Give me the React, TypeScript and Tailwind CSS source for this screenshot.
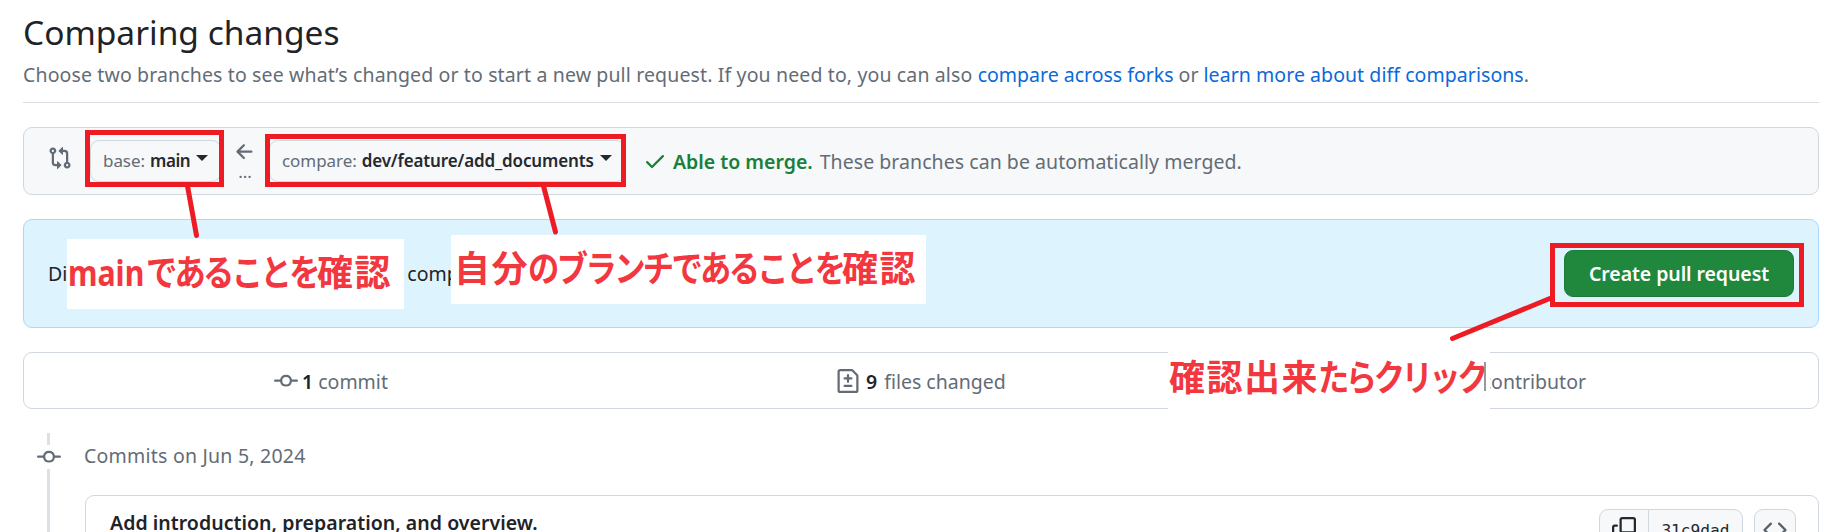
import type { ReactNode } from "react";

type IconProps = { className?: string; children: ReactNode };

function Octicon({ className, children }: IconProps) {
  return (
    <svg viewBox="0 0 16 16" width="24" height="24" fill="currentColor" fillRule="evenodd" className={className}>
      {children}
    </svg>
  );
}

const CommitPath = () => (
  <path d="M11.93 8.5a4.002 4.002 0 0 1-7.86 0H.75a.75.75 0 0 1 0-1.5h3.32a4.002 4.002 0 0 1 7.86 0h3.32a.75.75 0 0 1 0 1.5Zm-1.43-.75a2.5 2.5 0 1 0-5 0 2.5 2.5 0 0 0 5 0Z" />
);

function Header() {
  return (
    <header className="h-[103px] border-b border-[#d8dee4] pt-[10px]">
      <h1 className="text-[33.5px] leading-[45px] font-normal text-[#1f2328]">Comparing changes</h1>
      <p className="mt-[5px] leading-[30px] text-[#636c76]">
        <span className="tracking-[0.135px]">
          Choose two branches to see what’s changed or to start a new pull request. If you need to, you can also{" "}
        </span>
        <a className="text-[#0969da]">compare across forks</a> or{" "}
        <a className="text-[#0969da] tracking-[0.06px]">learn more about diff comparisons</a>.
      </p>
    </header>
  );
}

function BranchButton({ label, name, className }: { label: string; name: ReactNode; className: string }) {
  return (
    <div className={`flex h-[42px] items-center rounded-[9px] border border-[#d0d7de] bg-[#f6f8fa] pl-[12px] text-[17px] ${className}`}>
      <span className="tracking-[-0.06px] text-[#636c76]">{label}</span>
      <span className="ml-[5px] font-semibold text-[#24292f]">{name}</span>
      <span className="mb-[7px] ml-[6px] h-0 w-0 border-x-6 border-t-6 border-x-transparent border-t-[#24292f]" />
    </div>
  );
}

function RangeEditor() {
  return (
    <section className="mt-6 flex h-[68px] items-center rounded-[9px] border border-[#d0d7de] bg-[#f6f8fa] pl-6">
      <Octicon className="-mt-[6px] text-[#636c76]">
        <path d="M9.573.677A.25.25 0 0 1 10 .854V2.5h1A2.5 2.5 0 0 1 13.5 5v5.628a2.251 2.251 0 1 1-1.5 0V5a1 1 0 0 0-1-1h-1v1.646a.25.25 0 0 1-.427.177L7.177 3.427a.25.25 0 0 1 0-.354ZM6 12v-1.646a.25.25 0 0 1 .427-.177l2.396 2.396a.25.25 0 0 1 0 .354l-2.396 2.396A.25.25 0 0 1 6 15.146V13.5H5A2.5 2.5 0 0 1 2.5 11V5.372a2.25 2.25 0 1 1 1.5 0V11a1 1 0 0 0 1 1ZM3.25 2.5a.75.75 0 1 0 0 1.5.75.75 0 0 0 0-1.5ZM12.75 12a.75.75 0 1 0 0 1.5.75.75 0 0 0 0-1.5Z" />
      </Octicon>
      <BranchButton label="base:" name={<span className="tracking-[-0.4px]">main</span>} className="ml-[18px] w-[131px]" />
      <div className="ml-3 flex w-6 flex-col items-center text-[#636c76]">
        <Octicon className="-mt-[3px]">
          <path d="M7.78 12.53a.75.75 0 0 1-1.06 0L2.47 8.28a.75.75 0 0 1 0-1.06l4.25-4.25a.751.751 0 0 1 1.042.018.751.751 0 0 1 .018 1.042L4.81 7h7.44a.75.75 0 0 1 0 1.5H4.81l2.97 2.97a.75.75 0 0 1 0 1.06Z" />
        </Octicon>
        <span className="-mt-px h-[17px] text-[17px] leading-[17px]">...</span>
      </div>
      <BranchButton
        label="compare:"
        name={<span className="tracking-[-0.13px]">dev/feature/add_documents</span>}
        className="ml-[12px] w-[356px]"
      />
      <div className="ml-[18px] flex items-center">
        <Octicon className="text-[#1a7f37]">
          <path d="M13.78 4.22a.75.75 0 0 1 0 1.06l-7.25 7.25a.75.75 0 0 1-1.06 0L2.22 9.28a.751.751 0 0 1 .018-1.042.751.751 0 0 1 1.042-.018L6 10.94l6.72-6.72a.75.75 0 0 1 1.06 0Z" />
        </Octicon>
        <span className="ml-[6px] pt-px font-semibold text-[#1a7f37]">Able to merge.</span>
        <span className="ml-[7px] pt-px tracking-[0.05px] text-[#636c76]">These branches can be automatically merged.</span>
      </div>
    </section>
  );
}

function PullRequestPrompt() {
  return (
    <section className="mt-6 flex h-[109px] items-center justify-between rounded-[9px] border border-[#a8d8ff] bg-[#ddf4ff] pr-6 pl-6">
      <p className="tracking-[0.09px] text-[#1f2328]">
        Discuss and review the changes in this comparison with others.
      </p>
      <button className="h-[47px] w-[230px] rounded-[9px] border border-[#1c7b37] bg-[#1f883d] pt-px font-semibold tracking-[-0.08px] text-white">
        Create pull request
      </button>
    </section>
  );
}

function Stats() {
  return (
    <section className="mt-6 grid h-[57px] grid-cols-3 items-center rounded-[9px] border border-[#d0d7de] text-[#636c76]">
      <div className="flex items-center pl-[250px]">
        <Octicon>
          <CommitPath />
        </Octicon>
        <span className="ml-[4px] pt-[2px]">
          <span className="font-semibold text-[#1f2328]">1</span> commit
        </span>
      </div>
      <div className="flex items-center pl-[214px]">
        <Octicon>
          <path d="M1 1.75C1 .784 1.784 0 2.75 0h7.586c.464 0 .909.184 1.237.513l2.914 2.914c.329.328.513.773.513 1.237v9.586A1.75 1.75 0 0 1 13.25 16H2.75A1.75 1.75 0 0 1 1 14.25Zm1.75-.25a.25.25 0 0 0-.25.25v12.5c0 .138.112.25.25.25h10.5a.25.25 0 0 0 .25-.25V4.664a.25.25 0 0 0-.073-.177l-2.914-2.914a.25.25 0 0 0-.177-.073ZM8 3.25a.75.75 0 0 1 .75.75v1.5h1.5a.75.75 0 0 1 0 1.5h-1.5v1.5a.75.75 0 0 1-1.5 0V7h-1.5a.75.75 0 0 1 0-1.5h1.5V4A.75.75 0 0 1 8 3.25Zm-3 8a.75.75 0 0 1 .75-.75h4.5a.75.75 0 0 1 0 1.5h-4.5a.75.75 0 0 1-.75-.75Z" />
        </Octicon>
        <span className="ml-[6px] pt-[2px]">
          <span className="font-semibold text-[#1f2328]">9</span>
          <span className="ml-[7px]">files changed</span>
        </span>
      </div>
      <div className="pt-[2px] pr-[232px] text-right">
        <span className="font-semibold text-[#1f2328]">1</span> contributor
      </div>
    </section>
  );
}

function Timeline() {
  return (
    <section className="mt-6 flex h-[99px] overflow-hidden">
      <div className="flex w-[62px] flex-col items-start">
        <div className="ml-6 h-3 w-[3px] bg-[#dce1e6]" />
        <Octicon className="ml-[14px] text-[#636c76]">
          <CommitPath />
        </Octicon>
        <div className="ml-6 w-[3px] flex-1 bg-[#dce1e6]" />
      </div>
      <div className="flex-1">
        <h2 className="mt-[8px] -ml-px leading-[30px] font-normal tracking-[0.23px] text-[#636c76]">Commits on Jun 5, 2024</h2>
        <div className="mt-[24px] flex h-[80px] items-start rounded-t-[9px] border border-[#d0d7de] pl-6">
          <p className="mt-[12px] leading-[30px] font-semibold tracking-[0.04px] text-[#1f2328]">
            Add introduction, preparation, and overview.
          </p>
          <div className="mt-[13px] mr-[22px] ml-auto flex gap-[11px]">
            <div className="flex h-[42px] rounded-[9px] border border-[#d0d7de] bg-[#f6f8fa]">
              <div className="flex w-[49px] justify-center border-r border-[#d0d7de] pt-[7px]">
                <Octicon className="text-[#24292f]">
                  <path d="M0 6.75C0 5.784.784 5 1.75 5h1.5a.75.75 0 0 1 0 1.5h-1.5a.25.25 0 0 0-.25.25v7.5c0 .138.112.25.25.25h7.5a.25.25 0 0 0 .25-.25v-1.5a.75.75 0 0 1 1.5 0v1.5A1.75 1.75 0 0 1 9.25 16h-7.5A1.75 1.75 0 0 1 0 14.25Z" />
                  <path d="M5 1.75C5 .784 5.784 0 6.75 0h7.5C15.216 0 16 .784 16 1.75v7.5A1.75 1.75 0 0 1 14.25 11h-7.5A1.75 1.75 0 0 1 5 9.25Zm1.75-.25a.25.25 0 0 0-.25.25v7.5c0 .138.112.25.25.25h7.5a.25.25 0 0 0 .25-.25v-7.5a.25.25 0 0 0-.25-.25Z" />
                </Octicon>
              </div>
              <span className="w-[93px] pt-[8px] text-center font-['DejaVu_Sans_Mono',monospace] text-[16.2px] leading-[26px] text-[#24292f]">
                31c9dad
              </span>
            </div>
            <div className="flex h-[42px] w-[42px] justify-center rounded-[9px] border border-[#d0d7de] bg-[#f6f8fa] pt-[8px]">
              <Octicon className="text-[#57606a]">
                <path d="m11.28 3.22 4.25 4.25a.75.75 0 0 1 0 1.06l-4.25 4.25a.749.749 0 0 1-1.275-.326.749.749 0 0 1 .215-.734L13.94 8l-3.72-3.72a.749.749 0 0 1 .326-1.275.749.749 0 0 1 .734.215Zm-6.56 0a.751.751 0 0 1 1.042.018.751.751 0 0 1 .018 1.042L2.06 8l3.72 3.72a.749.749 0 0 1-.326 1.275.749.749 0 0 1-.734-.215L.47 8.53a.75.75 0 0 1 0-1.06Z" />
              </Octicon>
            </div>
          </div>
        </div>
      </div>
    </section>
  );
}

/* Red callout text: kanji at full width, kana condensed. */
function Kanji({ children }: { children: string }) {
  return <span className="tracking-[1.5px]">{children}</span>;
}

function Kana({ children, className }: { children: string; className: string }) {
  return (
    <span className={className}>
      <span className="-ml-px inline-block origin-left scale-x-[0.87]">{children}</span>
    </span>
  );
}

function Callouts() {
  return (
    <div className="pointer-events-none absolute inset-0 font-['Noto_Sans','Noto_Sans_CJK_JP',sans-serif] text-[36px] leading-[50px] font-bold whitespace-nowrap text-[#f2373f]">
      <div className="absolute top-[239px] left-[67px] flex h-[70px] w-[337px] bg-white pt-[9px] pl-[1px]">
        <span className="w-[79px]">
          <span className="inline-block origin-left scale-x-[0.84]">main</span>
        </span>
        <Kana className="w-[170px] tracking-[-3px]">であることを</Kana>
        <Kanji>確認</Kanji>
      </div>
      <div className="absolute top-[235px] left-[451px] flex h-[69px] w-[475px] bg-white pt-[9px] pl-[3px]">
        <Kanji>自分</Kanji>
        <Kana className="w-[313px] tracking-[-3px]">のブランチであることを</Kana>
        <Kanji>確認</Kanji>
      </div>
      <div className="absolute top-[343px] left-[1168px] flex h-[70px] w-[322px] bg-white pt-[10px] pl-[1px]">
        <Kanji>確認出来</Kanji>
        <Kana className="w-[166px] tracking-[-4px]">たらクリック</Kana>
        <span className="absolute top-[19px] left-[316px] h-[29px] w-[2px] bg-[#999]" />
      </div>
      <div className="absolute top-[130px] left-[85px] h-[57px] w-[139px] border-5 border-[#ed1c24]" />
      <div className="absolute top-[134px] left-[265px] h-[53px] w-[361px] border-5 border-[#ed1c24]" />
      <div className="absolute top-[243px] left-[1550px] h-[64px] w-[254px] border-5 border-[#ed1c24]" />
      <svg className="absolute inset-0 h-full w-full" stroke="#ed1c24" strokeWidth="5" strokeLinecap="round">
        <path d="M187.5 186L196.5 235.5M543.5 186L555.5 232M1551 298L1452.5 338.5" />
      </svg>
    </div>
  );
}

export default function App() {
  return (
    <main className="relative h-[532px] w-[1833px] overflow-hidden bg-white pr-[14px] pl-[23px] font-['Noto_Sans',sans-serif] text-[19.5px]">
      <Header />
      <RangeEditor />
      <PullRequestPrompt />
      <Stats />
      <Timeline />
      <Callouts />
    </main>
  );
}
